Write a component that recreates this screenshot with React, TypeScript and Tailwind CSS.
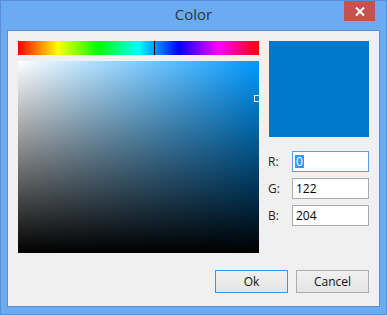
import { useState } from "react";

export default function App() {
  const [g, setG] = useState("122");
  const [b, setB] = useState("204");

  const campo = "w-[77px] h-[21px] border bg-white px-[3px] text-[12px] text-black outline-none";

  return (
    <div className="w-[387px] h-[315px] bg-[#6aabf3] border border-[#5a8fd2] flex flex-col px-[6px] pb-[7px] font-['Open_Sans','Liberation_Sans',sans-serif]">
      <div className="h-[29px] flex items-center justify-center relative">
        <span className="text-[15px] text-[#333] mt-[-2px]">Color</span>
        <div className="absolute right-[5px] top-0 w-[31px] h-[20px] bg-[#c75050] flex items-center justify-center">
          <svg width="10" height="9" viewBox="0 0 10 9">
            <path d="M1 0.5 L9 8.5 M9 0.5 L1 8.5" stroke="white" strokeWidth="2" />
          </svg>
        </div>
      </div>
      <div className="flex-1 bg-[#f0f0f0] border border-[#5a8fd2] flex flex-col pt-[10px] pl-[10px] pr-[9px]">
        <div className="flex gap-[10px]">
          <div className="w-[241px] flex flex-col gap-[6px]">
            <div className="h-[14px] relative bg-[linear-gradient(to_right,#ff0000,#ffff00,#00ff00,#00ffff,#0000ff,#ff00ff,#ff0000)]">
              <div className="absolute left-[136px] top-0 w-px h-full bg-black" />
            </div>
            <div className="h-[192px] relative overflow-hidden bg-[#0099ff]">
              <div className="absolute inset-0 bg-[linear-gradient(to_right,#ffffff,rgba(255,255,255,0))]" />
              <div className="absolute inset-0 bg-[linear-gradient(to_bottom,rgba(0,0,0,0),#000000)]" />
              <div className="absolute left-[236px] top-[34px] w-[7px] h-[7px] border border-white" />
            </div>
          </div>
          <div className="flex flex-col">
            <div className="w-[100px] h-[96px] bg-[#0079cc]" />
            <div className="mt-[14px] flex flex-col gap-[6px] -ml-px text-[12px] text-[#222]">
              <div className="flex items-center">
                <span className="w-[24px]">R:</span>
                <div className="w-[77px] h-[21px] border border-[#5b9de6] bg-white px-[2px] flex items-center">
                  <span className="bg-[#3399ff] text-white leading-[13px] px-px">0</span>
                </div>
              </div>
              <label className="flex items-center">
                <span className="w-[24px]">G:</span>
                <input className={campo + " border-[#ababab]"} value={g} onChange={(e) => setG(e.target.value)} />
              </label>
              <label className="flex items-center">
                <span className="w-[24px]">B:</span>
                <input className={campo + " border-[#ababab]"} value={b} onChange={(e) => setB(e.target.value)} />
              </label>
            </div>
          </div>
        </div>
        <div className="flex justify-end gap-[8px] mt-[17px] pr-px">
          <button className="w-[73px] h-[23px] border border-[#3c94e8] bg-[linear-gradient(to_bottom,#f0f0f0,#e5e5e5)] text-[12px] text-[#111]">Ok</button>
          <button className="w-[73px] h-[23px] border border-[#acacac] bg-[linear-gradient(to_bottom,#f0f0f0,#e5e5e5)] text-[12px] text-[#111]">Cancel</button>
        </div>
      </div>
    </div>
  );
}
